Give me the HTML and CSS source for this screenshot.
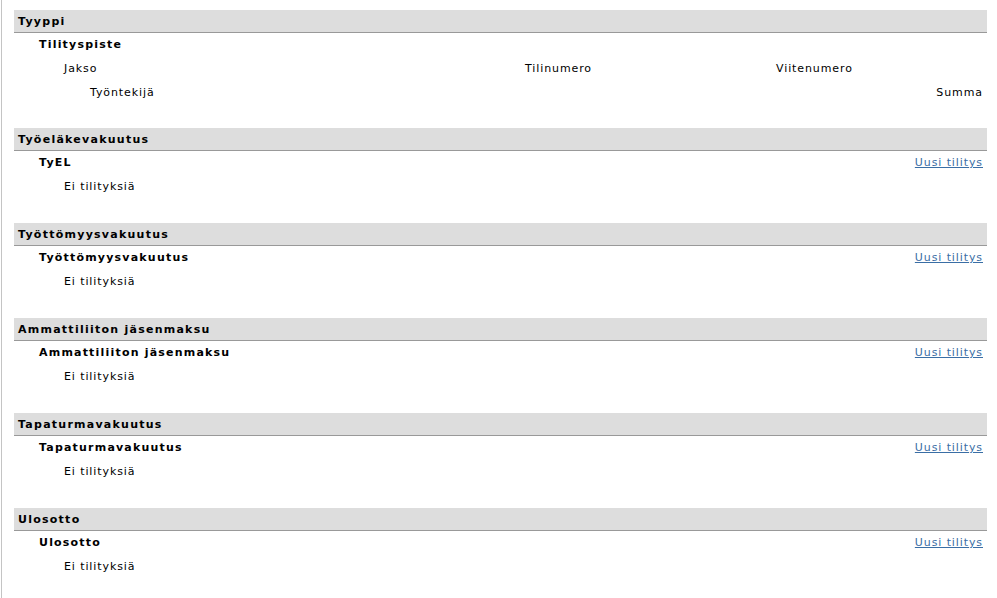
FILE: index.html
```html
<!DOCTYPE html>
<html lang="fi">
<head>
  <meta charset="UTF-8">
  <title>Tilitykset</title>
  <link rel="stylesheet" href="styles.css">
</head>
<body>
<div class="page">

  <div class="section">
    <div class="type-head">Tyyppi</div>
    <div class="row lvl1">Tilityspiste</div>
    <div class="row lvl2 cols">
      <span>Jakso</span>
      <span>Tilinumero</span>
      <span>Viitenumero</span>
    </div>
    <div class="row lvl3 split last">
      <span>Työntekijä</span>
      <span>Summa</span>
    </div>
  </div>

  <div class="section">
    <div class="type-head">Työeläkevakuutus</div>
    <div class="row lvl1 split"><span>TyEL</span><a href="#">Uusi tilitys</a></div>
    <div class="row lvl2 empty">Ei tilityksiä</div>
  </div>

  <div class="section">
    <div class="type-head">Työttömyysvakuutus</div>
    <div class="row lvl1 split"><span>Työttömyysvakuutus</span><a href="#">Uusi tilitys</a></div>
    <div class="row lvl2 empty">Ei tilityksiä</div>
  </div>

  <div class="section">
    <div class="type-head">Ammattiliiton jäsenmaksu</div>
    <div class="row lvl1 split"><span>Ammattiliiton jäsenmaksu</span><a href="#">Uusi tilitys</a></div>
    <div class="row lvl2 empty">Ei tilityksiä</div>
  </div>

  <div class="section">
    <div class="type-head">Tapaturmavakuutus</div>
    <div class="row lvl1 split"><span>Tapaturmavakuutus</span><a href="#">Uusi tilitys</a></div>
    <div class="row lvl2 empty">Ei tilityksiä</div>
  </div>

  <div class="section">
    <div class="type-head">Ulosotto</div>
    <div class="row lvl1 split"><span>Ulosotto</span><a href="#">Uusi tilitys</a></div>
    <div class="row lvl2 empty">Ei tilityksiä</div>
  </div>

</div>
</body>
</html>
```

FILE: styles.css
```css
html, body {
  margin: 0;
  padding: 0;
  background: #ffffff;
  height: 100%;
}
body {
  font-family: 'DejaVu Sans', Verdana, sans-serif;
  font-size: 11px;
  letter-spacing: 0.9px;
  color: #000;
}
.page {
  margin-left: 1px;
  border-left: 1px solid #c4c4c4;
  padding: 10px 10px 0 12px;
  min-height: 100%;
  box-sizing: border-box;
}
.section {
  margin-bottom: 24px;
}
.type-head {
  background: #dddddd;
  border-bottom: 1px solid #999999;
  height: 22px;
  line-height: 23px;
  padding: 0 4px;
  font-weight: bold;
  letter-spacing: 1.25px;
}
.row {
  height: 24px;
  line-height: 24px;
  padding-right: 4px;
}
.row.last {
  height: 23px;
}
.lvl1 {
  padding-left: 25px;
  font-weight: bold;
  letter-spacing: 1.2px;
}
.lvl1 a {
  font-weight: normal;
  letter-spacing: 0.9px;
}
.lvl2 {
  padding-left: 50px;
}
.lvl3 {
  padding-left: 76px;
}
.split {
  display: flex;
  justify-content: space-between;
}
.cols {
  display: grid;
  grid-template-columns: 461px 251px 1fr;
}
a {
  color: #3a6ea5;
  text-decoration: underline;
}
```
